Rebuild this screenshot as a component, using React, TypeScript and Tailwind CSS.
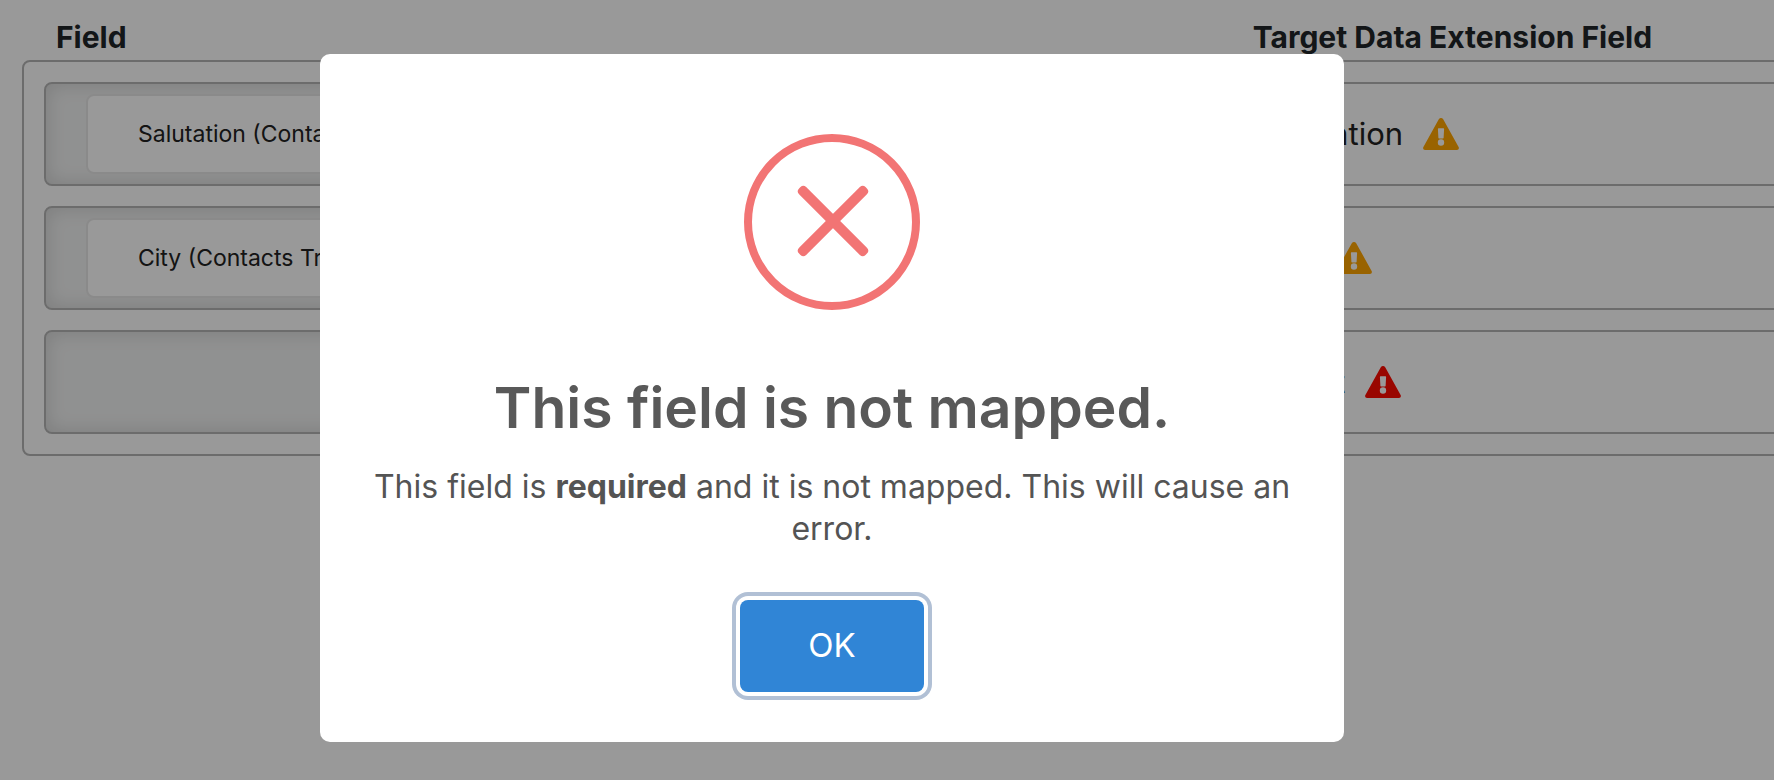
import { useEffect, useRef, useState } from 'react';

type Mapping = {
  id: number;
  source: string | null;
  target: string;
  level: 'warning' | 'error';
};

const mappings: Mapping[] = [
  { id: 1, source: 'Salutation (Contacts Trigger)', target: 'Salutation', level: 'warning' },
  { id: 2, source: 'City (Contacts Trigger)', target: 'City', level: 'warning' },
  { id: 3, source: null, target: 'Street', level: 'error' },
];

function AlertTriangle({ className }: { className: string }) {
  return (
    <svg viewBox="0 0 36 32" fill="currentColor" className={className} aria-hidden="true">
      <path
        fillRule="evenodd"
        d="M20.2 1.2l15.4 27.7c.8 1.4-.1 3.1-1.7 3.1H2.1C.5 32-.4 30.3.4 28.9L15.8 1.2c1-1.6 3.4-1.6 4.4 0zM14.9 10.9l.5 9c0 .3.3.5.6.5h4c.3 0 .6-.2.6-.5l.5-9c0-.4-.2-.7-.6-.7h-5c-.4 0-.6.3-.6.7zM18 21.3a3.2 3.2 0 1 0 0 6.4 3.2 3.2 0 0 0 0-6.4z"
      />
    </svg>
  );
}

function MappingRow({ mapping, onShowIssue }: { mapping: Mapping; onShowIssue: () => void }) {
  return (
    <div className="grid grid-cols-[2fr_1fr] gap-5">
      <div className="flex h-[104px] rounded-lg border-2 border-[#b5b5b5] bg-[#f1f2f2] px-10 py-[10px] shadow-[inset_0_0_20px_rgba(0,0,0,0.14)]">
        {mapping.source && (
          <div className="flex flex-1 items-center rounded-lg border-2 border-[#e6e6e6] bg-white pl-[50px] text-[23px] text-[#222222]">
            {mapping.source}
          </div>
        )}
      </div>
      <div className="flex h-[104px] items-center gap-5 rounded-lg border-2 border-[#b5b5b5] pl-[45px] text-[31px] text-[#222222]">
        <span>{mapping.target}</span>
        <button type="button" aria-label={`Show ${mapping.level}`} onClick={onShowIssue}>
          <AlertTriangle
            className={`h-8 w-9 ${mapping.level === 'error' ? 'text-[#ff0a00]' : 'text-[#ffa500]'}`}
          />
        </button>
      </div>
    </div>
  );
}

function ErrorIcon() {
  return (
    <svg viewBox="0 0 176 176" fill="#f27474" className="size-44" aria-hidden="true">
      <circle cx="88" cy="88" r="84" fill="none" stroke="#f27474" strokeWidth="8" />
      <rect x="42" y="82" width="94" height="10" rx="4" transform="rotate(45 89 87)" />
      <rect x="42" y="82" width="94" height="10" rx="4" transform="rotate(-45 89 87)" />
    </svg>
  );
}

function AlertDialog({ onClose }: { onClose: () => void }) {
  const okRef = useRef<HTMLButtonElement>(null);

  useEffect(() => {
    okRef.current?.focus();
  }, []);

  return (
    <div className="fixed inset-0 flex items-start justify-center bg-black/40 pt-[54px] pr-[110px]">
      <div
        role="alertdialog"
        aria-modal="true"
        aria-labelledby="alert-title"
        aria-describedby="alert-text"
        className="flex w-full max-w-5xl flex-col items-center rounded-[10px] bg-white px-10 pt-20 pb-[50px] text-center text-[#545454]"
      >
        <ErrorIcon />
        <h2 id="alert-title" className="mt-16 text-[57px] leading-[68px] font-semibold text-[#595959]">
          This field is not mapped.
        </h2>
        <p id="alert-text" className="mt-6 text-[32px] leading-[42px]">
          This field is <b>required</b> and it is not mapped. This will cause an error.
        </p>
        <button
          ref={okRef}
          type="button"
          onClick={onClose}
          className="mt-[50px] h-[92px] w-[184px] rounded-lg bg-[#3085d6] text-[33px] text-white outline-none focus:ring-4 focus:ring-[#b1c0d5] focus:ring-offset-4"
        >
          OK
        </button>
      </div>
    </div>
  );
}

export default function App() {
  const [isAlertOpen, setIsAlertOpen] = useState(true);

  return (
    <div className="min-h-screen overflow-hidden bg-white pt-[14px] pl-[22px] font-[Inter,sans-serif]">
      {/* Panel runs past the right edge of the window */}
      <div className="-mr-8">
        <div className="grid grid-cols-[2fr_1fr] gap-5 px-[22px] text-[30px] leading-[46px] font-bold text-[#212529]">
          <h3 className="pl-3">Field</h3>
          <h3 className="pl-[42px]">Target Data Extension Field</h3>
        </div>
        <div className="flex flex-col gap-5 rounded-lg border-2 border-[#b5b5b5] p-5">
          {mappings.map((mapping) => (
            <MappingRow key={mapping.id} mapping={mapping} onShowIssue={() => setIsAlertOpen(true)} />
          ))}
        </div>
      </div>
      {isAlertOpen && <AlertDialog onClose={() => setIsAlertOpen(false)} />}
    </div>
  );
}
